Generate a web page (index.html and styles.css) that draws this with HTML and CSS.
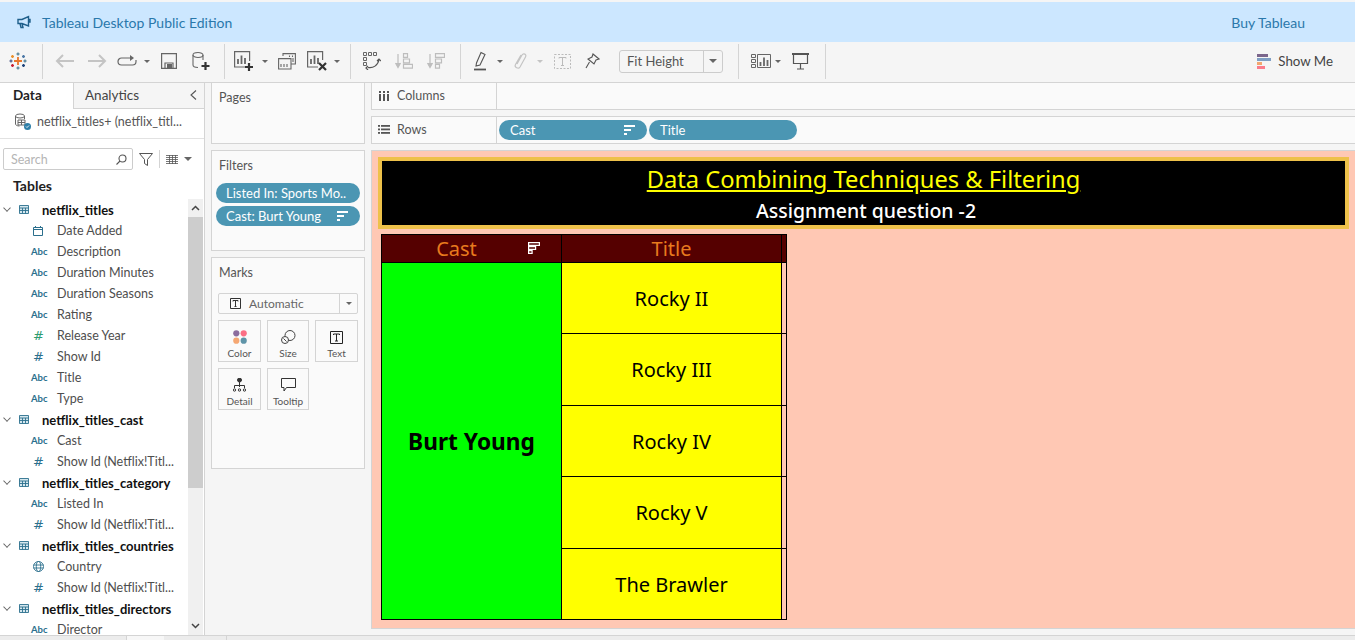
FILE: index.html
```html
<!DOCTYPE html>
<html>
<head>
    <title>Tableau Desktop Public Edition</title>
    <link rel="stylesheet" href="styles.css">
</head>
<body>
    <div class="banner">
        <svg class="banner-icon" width="14" height="14" viewBox="0 0 14 14" fill="none" stroke="#1f5f8b" stroke-width="1.4"><path d="M1 4.500h4L11.500 1.500v9.500L5 8.500H1zM3 8.500l1 4h2l-1-4M11.500 4.500h1.500v2.500h-1.500"/></svg>
        <span class="banner-title">Tableau Desktop Public Edition</span>
        <span class="banner-buy">Buy Tableau</span>
    </div>

    <div class="toolbar">
        <div class="tool-group group-logo">
            <svg width="18" height="18" viewBox="0 0 18 18" stroke-width="1.400" fill="none">
                <path d="M9 5v8M5 9h8" stroke="#e8762b" stroke-width="1.800"/>
                <path d="M9 0.500v3M7.500 2h3" stroke="#5b879b"/>
                <path d="M3.500 3v3M2 4.500h3" stroke="#eb912b"/>
                <path d="M14.500 3v3M13 4.500h3" stroke="#4e79a7"/>
                <path d="M0.500 9h3M2 7.500v3" stroke="#5b6591"/>
                <path d="M14.500 9h3M16 7.500v3" stroke="#59879b"/>
                <path d="M3.500 12v3M2 13.500h3" stroke="#c72035"/>
                <path d="M14.500 12v3M13 13.500h3" stroke="#1f447a"/>
                <path d="M9 14.500v3M7.500 16h3" stroke="#5b879b"/>
            </svg>
        </div>
        <div class="tool-group group-file">
            <span class="tool w32"><svg width="22" height="16" viewBox="0 0 22 16" fill="none" stroke="#c4c4c4" stroke-width="2"><path d="M20 8H3M9 2L3 8l6 6"/></svg></span>
            <span class="tool w32"><svg width="22" height="16" viewBox="0 0 22 16" fill="none" stroke="#c4c4c4" stroke-width="2"><path d="M2 8h17M13 2l6 6-6 6"/></svg></span>
            <span class="tool w28"><svg width="20" height="12" viewBox="0 0 20 12" fill="none" stroke="#666" stroke-width="1.200"><path d="M13 3H4.500a3.500 3.500 0 0 0 0 7h11a3.500 3.500 0 0 0 3.500-3.500V5"/><path d="M13 0l4 3-4 3z" fill="#666" stroke="none"/></svg></span>
            <span class="caret-slot w12"><i class="caret"></i></span>
            <span class="tool w32"><svg width="16" height="16" viewBox="0 0 16 16" fill="none" stroke="#666" stroke-width="1.200"><path d="M.6.600h14.800v14.800H.6zM4 15v-5h8v5"/><path d="M6 11h5v4H6z" fill="#666" stroke="none"/></svg></span>
            <span class="tool w32"><svg width="20" height="20" viewBox="0 0 20 20" fill="none" stroke="#666" stroke-width="1.100"><ellipse cx="7" cy="4" rx="5" ry="2.500"/><path d="M2 4v10c0 1.500 2 2.500 5 2.500M12 4v5"/><path d="M14.500 11v8M10.500 15h8" stroke="#333" stroke-width="2.200"/></svg></span>
        </div>
        <div class="tool-group group-sheet">
            <span class="tool w32"><svg width="20" height="20" viewBox="0 0 20 20" fill="none" stroke="#666" stroke-width="1.200"><path d="M13 16H.6V.6h15V10"/><path d="M4 13V8M7.500 13V4.500M11 13V7" stroke-width="1.800"/><path d="M15 12v8M11 16h8" stroke="#333" stroke-width="2.200"/></svg></span>
            <span class="caret-slot w10"><i class="caret"></i></span>
            <span class="tool w32 shift1"><svg width="18" height="17" viewBox="0 0 18 17" fill="none" stroke="#666" stroke-width="1.100"><path d="M5 3V.6h12.400V11H13"/><path d="M.6 5.600h12.400V16H.6z" fill="#f4f4f4"/><path d="M15 9V5M11.500 4V2.500M14.500 4V2.500"/><path d="M3 14v-3M6 14v-3M9 14v-3"/></svg></span>
            <span class="tool w28"><svg width="20" height="20" viewBox="0 0 20 20" fill="none" stroke="#666" stroke-width="1.200"><path d="M11 16H.6V.6h15V9"/><path d="M4 13V8M7.500 13V4.500M11 13V7" stroke-width="1.800"/><path d="M12 12l7 7M19 12l-7 7" stroke="#333" stroke-width="2.200"/></svg></span>
            <span class="caret-slot w12"><i class="caret"></i></span>
        </div>
        <div class="tool-group group-sort">
            <span class="tool w32"><svg width="18" height="18" viewBox="0 0 18 18" fill="none" stroke="#666" stroke-width="1"><path d="M.5.500h3v3h-3zM5.500.500h3v3h-3zM10.500.500h3v3h-3zM.5 5.500h3v3h-3zM.5 10.500h3v3h-3z"/><path d="M5 15.500c5 1 10-2 11-8M14 9l2-2 2 2M5 14l-2 2 2 2" stroke="#555" stroke-width="1.200"/></svg></span>
            <span class="tool w32"><svg width="18" height="16" viewBox="0 0 18 16" fill="none" stroke="#bdbdbd" stroke-width="1.200"><path d="M3 1v13"/><path d="M.5 10L3 14.500 5.500 10" fill="#bdbdbd"/><path d="M8.500.6h4v3.800h-4zM8.500 6h6v3.800h-6zM8.500 11.400h9v3.800h-9z"/></svg></span>
            <span class="tool w32"><svg width="18" height="16" viewBox="0 0 18 16" fill="none" stroke="#bdbdbd" stroke-width="1.200"><path d="M3 1v13"/><path d="M.5 10L3 14.500 5.500 10" fill="#bdbdbd"/><path d="M8.500.6h9v3.800h-9zM8.500 6h6v3.800h-6zM8.500 11.400h4v3.800h-4z"/></svg></span>
        </div>
        <div class="tool-group group-format">
            <span class="tool w28"><svg width="14" height="20" viewBox="0 0 14 20" fill="none" stroke="#555" stroke-width="1.100"><path d="M7 1.500l4 2L6 14l-4 1 .5-3z"/><path d="M0 18.500h12" stroke-width="1.800"/></svg></span>
            <span class="caret-slot w10"><i class="caret"></i></span>
            <span class="tool w30"><svg width="15" height="18" viewBox="0 0 15 18" fill="none" stroke="#c4c4c4" stroke-width="1.200"><path d="M4 12L9 3c1.500-2.500 5-.5 3.500 2L7 15c-1.500 2.500-6 .5-4.500-2.500L8 3"/></svg></span>
            <span class="caret-slot w10"><i class="caret caret-off"></i></span>
            <span class="tool w32 shift1"><svg width="17" height="15" viewBox="0 0 17 15" fill="none" stroke="#bbb"><path d="M.5.500h16v14H.5z" stroke-dasharray="2 1.500"/><path d="M5 4.500V3.500h7v1M8.500 3.500v8M7 11.500h3"/></svg></span>
            <span class="tool w28"><svg width="15" height="16" viewBox="0 0 15 16" fill="none" stroke="#555" stroke-width="1.100"><path d="M8 1l6 5-3 1-2 4-6-5 4-2zM4.500 9L1 15"/></svg></span>
            <div class="fit-select">
                <span class="fit-label">Fit Height</span>
                <span class="fit-arrow"><i class="caret caret-big"></i></span>
            </div>
        </div>
        <div class="tool-group group-show">
            <span class="tool w24"><svg width="20" height="14" viewBox="0 0 20 14" fill="none" stroke="#666"><path d="M.5.500h4v3h-4zM.5 5.500h4v3h-4zM.5 10.500h4v3h-4zM6.500.500h13v13h-13z"/><path d="M9.500 12V8M13 12V3.500M16.500 12V6" stroke-width="1.800"/></svg></span>
            <span class="caret-slot w10"><i class="caret"></i></span>
            <span class="tool w32 shift1"><svg width="17" height="17" viewBox="0 0 17 17" fill="none" stroke="#555" stroke-width="1.200"><path d="M0 1h17" stroke-width="2"/><path d="M1.500 1v9.500h14V1M8.500 10.500v5M5 16h7"/></svg></span>
        </div>
        <div class="show-me">
            <svg width="14" height="15" viewBox="0 0 14 15"><rect width="11" height="3" x="0" y="0" fill="#7b668c"/><rect width="14" height="3" x="0" y="4" fill="#7f9fc4"/><rect width="5" height="3" x="0" y="8" fill="#f3a66f"/><rect width="8" height="3" x="0" y="12" fill="#fb7c8b"/></svg>
            <span>Show Me</span>
        </div>
    </div>

    <div class="workspace">
        <aside class="data-pane">
            <div class="tabs">
                <div class="tab tab-active">Data</div>
                <div class="tab tab-other">Analytics
                    <svg class="collapse" width="7" height="10" viewBox="0 0 7 10" fill="none" stroke="#555" stroke-width="1.100"><path d="M6 .5L1 5l5 4.500"/></svg>
                </div>
            </div>
            <div class="source">
                <svg width="18" height="18" viewBox="0 0 18 18" fill="none" stroke="#666"><ellipse cx="6" cy="3" rx="4.500" ry="2"/><path d="M1.500 3v8c0 1 1.500 2 4 2M10.500 3v3M4 7h7v5H4zM4 9.500h7M7.500 7v5"/><circle cx="13.500" cy="13.500" r="3.500" fill="#2e7fa8" stroke="none"/><path d="M12 13.500l1 1 2-2" stroke="#fff" stroke-width=".9"/></svg>
                <span>netflix_titles+ (netflix_titl...</span>
            </div>
            <div class="search-row">
                <div class="search-box">
                    <span>Search</span>
                    <svg width="11" height="11" viewBox="0 0 11 11" fill="none" stroke="#555" stroke-width="1.100"><circle cx="6.500" cy="4.500" r="3.500"/><path d="M4 7l-3.500 3.500"/></svg>
                </div>
                <svg width="14" height="13" viewBox="0 0 14 13" fill="none" stroke="#555"><path d="M.5.500h13L8.500 6.500v6l-3-2v-4z"/></svg>
                <span class="search-sep"></span>
                <svg width="12" height="9" viewBox="0 0 12 9" fill="none" stroke="#555"><path d="M0 .5h12M0 2.500h12M0 4.500h12M0 6.500h12M0 8.500h12M3.500 0v9M6.500 0v9M9.500 0v9" stroke-width=".8"/></svg>
                <i class="caret caret-dark"></i>
            </div>
            <div class="tables-head">Tables</div>
            <div class="field-area">
                <ul class="field-list">
                    <li class="table-row"><span class="chev"></span><svg class="grid-ico" width="10" height="9" viewBox="0 0 10 9" fill="#d5e7ee" stroke="#2b6f8d" stroke-width=".9"><path d="M.5.500h9v8h-9zM.5 3h9M.5 5.500h9M3.500 3v5.500M6.500 3v5.500"/></svg><b>netflix_titles</b></li>
                    <li class="field"><span class="ftype"><svg width="10" height="10" viewBox="0 0 10 10" fill="none" stroke="#2b6f8d"><path d="M.5 1.500h9v8h-9zM.5 3.500h9M2.500 0v2M7.500 0v2"/></svg></span>Date Added</li>
                    <li class="field"><span class="ftype abc">Abc</span>Description</li>
                    <li class="field"><span class="ftype abc">Abc</span>Duration Minutes</li>
                    <li class="field"><span class="ftype abc">Abc</span>Duration Seasons</li>
                    <li class="field"><span class="ftype abc">Abc</span>Rating</li>
                    <li class="field"><span class="ftype hash hash-green">#</span>Release Year</li>
                    <li class="field"><span class="ftype hash">#</span>Show Id</li>
                    <li class="field"><span class="ftype abc">Abc</span>Title</li>
                    <li class="field"><span class="ftype abc">Abc</span>Type</li>
                    <li class="table-row"><span class="chev"></span><svg class="grid-ico" width="10" height="9" viewBox="0 0 10 9" fill="#d5e7ee" stroke="#2b6f8d" stroke-width=".9"><path d="M.5.500h9v8h-9zM.5 3h9M.5 5.500h9M3.500 3v5.500M6.500 3v5.500"/></svg><b>netflix_titles_cast</b></li>
                    <li class="field"><span class="ftype abc">Abc</span>Cast</li>
                    <li class="field"><span class="ftype hash">#</span>Show Id (Netflix!Titl...</li>
                    <li class="table-row"><span class="chev"></span><svg class="grid-ico" width="10" height="9" viewBox="0 0 10 9" fill="#d5e7ee" stroke="#2b6f8d" stroke-width=".9"><path d="M.5.500h9v8h-9zM.5 3h9M.5 5.500h9M3.500 3v5.500M6.500 3v5.500"/></svg><b>netflix_titles_category</b></li>
                    <li class="field"><span class="ftype abc">Abc</span>Listed In</li>
                    <li class="field"><span class="ftype hash">#</span>Show Id (Netflix!Titl...</li>
                    <li class="table-row"><span class="chev"></span><svg class="grid-ico" width="10" height="9" viewBox="0 0 10 9" fill="#d5e7ee" stroke="#2b6f8d" stroke-width=".9"><path d="M.5.500h9v8h-9zM.5 3h9M.5 5.500h9M3.500 3v5.500M6.500 3v5.500"/></svg><b>netflix_titles_countries</b></li>
                    <li class="field"><span class="ftype"><svg width="11" height="11" viewBox="0 0 11 11" fill="none" stroke="#2b6f8d" stroke-width=".9"><circle cx="5.500" cy="5.500" r="5"/><ellipse cx="5.500" cy="5.500" rx="2.200" ry="5"/><path d="M.5 4h10M.5 7h10"/></svg></span>Country</li>
                    <li class="field"><span class="ftype hash">#</span>Show Id (Netflix!Titl...</li>
                    <li class="table-row"><span class="chev"></span><svg class="grid-ico" width="10" height="9" viewBox="0 0 10 9" fill="#d5e7ee" stroke="#2b6f8d" stroke-width=".9"><path d="M.5.500h9v8h-9zM.5 3h9M.5 5.500h9M3.500 3v5.500M6.500 3v5.500"/></svg><b>netflix_titles_directors</b></li>
                    <li class="field"><span class="ftype abc">Abc</span>Director</li>
                </ul>
                <div class="scrollbar">
                    <span class="scroll-btn"><svg width="9" height="6" viewBox="0 0 9 6" fill="none" stroke="#444" stroke-width="1.500"><path d="M1 5l3.500-3.500L8 5"/></svg></span>
                    <span class="scroll-thumb"></span>
                    <span class="scroll-rest"></span>
                    <span class="scroll-btn"><svg width="9" height="6" viewBox="0 0 9 6" fill="none" stroke="#444" stroke-width="1.500"><path d="M1 1l3.500 3.500L8 1"/></svg></span>
                </div>
            </div>
        </aside>

        <section class="cards">
            <div class="card card-pages"><div class="card-title">Pages</div></div>
            <div class="card card-filters">
                <div class="card-title">Filters</div>
                <div class="pill pill-filter">Listed In: Sports Mo..</div>
                <div class="pill pill-filter">Cast: Burt Young
                    <svg class="sort-ico" width="11" height="10" viewBox="0 0 11 10" fill="#fff"><rect width="11" height="2"/><rect y="4" width="7" height="2"/><rect y="8" width="3" height="2"/></svg>
                </div>
            </div>
            <div class="card card-marks">
                <div class="card-title">Marks</div>
                <div class="mark-select">
                    <svg width="11" height="11" viewBox="0 0 11 11" fill="none" stroke="#333"><path d="M.5.500h10v10H.5zM3 3.500v-1h5v1M5.500 2.500v6M4.500 8.500h2"/></svg>
                    <span class="mark-label">Automatic</span>
                    <span class="mark-arrow"><i class="caret"></i></span>
                </div>
                <div class="mark-grid">
                    <div class="mark-btn">
                        <svg width="14" height="14" viewBox="0 0 14 14"><circle cx="3.300" cy="3.300" r="3.100" fill="#8c6d9e"/><circle cx="10.700" cy="3.300" r="3.100" fill="#fb6f85"/><circle cx="3.300" cy="10.700" r="3.100" fill="#f5a772"/><circle cx="10.700" cy="10.700" r="3.100" fill="#5f94a8"/></svg>
                        <span>Color</span>
                    </div>
                    <div class="mark-btn">
                        <svg width="15" height="14" viewBox="0 0 15 14" fill="none" stroke="#444"><circle cx="9" cy="5.500" r="5"/><circle cx="4" cy="10" r="3.500" fill="#fafafa"/><path d="M2.500 8.500l3 3"/></svg>
                        <span>Size</span>
                    </div>
                    <div class="mark-btn">
                        <svg width="13" height="13" viewBox="0 0 13 13" fill="none" stroke="#222"><path d="M.5.500h12v12H.5zM3.500 4V3h6v1M6.500 3v7M5 10h3"/></svg>
                        <span>Text</span>
                    </div>
                    <div class="mark-btn">
                        <svg width="13" height="14" viewBox="0 0 13 14" fill="none" stroke="#333"><circle cx="6.500" cy="2" r="2" fill="#333"/><path d="M6.500 4v5M1.500 10V7.500h10V10"/><circle cx="1.500" cy="12" r="1.200"/><circle cx="6.500" cy="12" r="1.200"/><circle cx="11.500" cy="12" r="1.200"/></svg>
                        <span>Detail</span>
                    </div>
                    <div class="mark-btn">
                        <svg width="15" height="14" viewBox="0 0 15 14" fill="none" stroke="#333"><path d="M.5.500h14v9H5.500l-2.500 3.500v-3.500H.5z"/></svg>
                        <span>Tooltip</span>
                    </div>
                </div>
            </div>
        </section>

        <section class="main">
            <div class="shelf">
                <div class="shelf-label"><svg width="12" height="10" viewBox="-1 0 12 10" fill="#555"><rect y="3" width="2" height="7"/><rect x="4" y="3" width="2" height="7"/><rect x="8" y="3" width="2" height="7"/><rect y="0" width="2" height="2"/><rect x="4" y="0" width="2" height="2"/><rect x="8" y="0" width="2" height="2"/></svg>Columns</div>
                <div class="shelf-body"></div>
            </div>
            <div class="shelf">
                <div class="shelf-label"><svg width="12" height="9" viewBox="0 0 12 9" fill="#555"><rect width="2" height="1.800"/><rect x="3" width="9" height="1.800"/><rect y="3.500" width="2" height="1.800"/><rect x="3" y="3.500" width="9" height="1.800"/><rect y="7" width="2" height="1.800"/><rect x="3" y="7" width="9" height="1.800"/></svg>Rows</div>
                <div class="shelf-body">
                    <div class="pill pill-shelf">Cast
                        <svg class="sort-ico" width="11" height="10" viewBox="0 0 11 10" fill="#fff"><rect width="11" height="2"/><rect y="4" width="7" height="2"/><rect y="8" width="3" height="2"/></svg>
                    </div>
                    <div class="pill pill-shelf">Title</div>
                </div>
            </div>

            <div class="viz">
                <div class="viz-title">
                    <div class="viz-heading">Data Combining Techniques &amp; Filtering</div>
                    <div class="viz-sub">Assignment question -2</div>
                </div>
                <div class="crosstab">
                    <div class="th th-cast">Cast
                        <svg class="th-sort" width="12" height="12" viewBox="0 0 12 12" fill="#550000" stroke="#fff" stroke-width="1.200"><path d="M.6.600h10.800v2.800H.6zM.6 4.600h7v2.800h-7zM.6 8.600h3.500v2.800H.6z"/></svg>
                    </div>
                    <div class="th th-title">Title</div>
                    <div class="th th-end"></div>
                    <div class="cast-cell">Burt Young</div>
                    <div class="title-cell">Rocky II</div>
                    <div class="end-cell"></div>
                    <div class="title-cell">Rocky III</div>
                    <div class="end-cell"></div>
                    <div class="title-cell">Rocky IV</div>
                    <div class="end-cell"></div>
                    <div class="title-cell">Rocky V</div>
                    <div class="end-cell"></div>
                    <div class="title-cell">The Brawler</div>
                    <div class="end-cell"></div>
                </div>
            </div>
        </section>
    </div>

    <div class="statusbar">
        <span class="status-tab"></span>
        <span class="status-tab status-tab-b"></span>
        <span class="status-tab status-tab-b"></span>
    </div>
</body>
</html>
```

FILE: styles.css
```css
* {
    box-sizing: border-box;
}
html, body {
    height: 100%;
}
body {
    margin: 0;
    padding-top: 2px;
    background-color: #f5f5f5;
    font-family: Lato, "Open Sans", sans-serif;
    font-size: 12.5px;
    color: #444;
    overflow: hidden;
}
ul {
    list-style: none;
    margin: 0;
    padding: 0;
}
.banner {
    height: 40px;
    display: flex;
    align-items: center;
    background-color: #cce7ff;
    color: #2a78ab;
    font-size: 14px;
}
.banner-icon {
    margin-left: 17px;
}
.banner-title {
    margin-left: 11px;
}
.banner-buy {
    margin-left: auto;
    margin-right: 50px;
}

.toolbar {
    height: 40px;
    padding-bottom: 2px;
    display: flex;
    align-items: center;
    background-color: #f5f5f5;
}
.tool-group {
    display: flex;
    align-items: center;
    height: 35px;
    border-right: 1px solid #d4d4d4;
}
.group-logo {
    width: 43px;
    padding-left: 9px;
}
.group-file {
    width: 182px;
    padding-left: 6px;
}
.group-sheet {
    width: 126px;
    padding-left: 3px;
}
.group-sort {
    width: 110px;
    padding-left: 5px;
}
.group-format {
    width: 278px;
    padding-left: 6px;
}
.group-show {
    width: 87px;
    padding-left: 10px;
}
.tool, .caret-slot {
    display: flex;
    justify-content: center;
    align-items: center;
}
.w10 { width: 10px; }
.w12 { width: 12px; }
.w24 { width: 24px; }
.w28 { width: 28px; }
.w30 { width: 30px; }
.w32 { width: 32px; }
.shift1 { margin-left: 1px; }
.caret {
    display: block;
    width: 0;
    height: 0;
    border-left: 3px solid transparent;
    border-right: 3px solid transparent;
    border-top: 3px solid #666;
}
.caret-off {
    border-top-color: #c4c4c4;
}
.caret-big {
    border-left-width: 4px;
    border-right-width: 4px;
    border-top-width: 4px;
}
.caret-dark {
    border-left-width: 4px;
    border-right-width: 4px;
    border-top-width: 4px;
    margin-left: 6px;
}
.fit-select {
    display: flex;
    width: 104px;
    height: 23px;
    margin-left: 13px;
    border: 1px solid #ccc;
    border-radius: 3px;
    color: #555;
    font-size: 13px;
}
.fit-label {
    flex: 1;
    padding-left: 7px;
    line-height: 20px;
}
.fit-arrow {
    width: 19px;
    display: flex;
    align-items: center;
    justify-content: center;
    border-left: 1px solid #ccc;
}
.show-me {
    margin-left: auto;
    margin-right: 22px;
    display: flex;
    align-items: center;
    gap: 7px;
    font-size: 13.3px;
    color: #444;
}

.workspace {
    display: flex;
    height: 553px;
    border-top: 1px solid #d4d4d4;
}
.data-pane {
    width: 205px;
    flex-shrink: 0;
    background-color: #fff;
    border-right: 1px solid #d4d4d4;
    display: flex;
    flex-direction: column;
}
.tabs {
    display: flex;
    height: 26px;
}
.tab {
    font-size: 13.5px;
    line-height: 24px;
}
.tab-active {
    width: 73px;
    padding-left: 13px;
    font-weight: 700;
    color: #222;
}
.tab-other {
    flex: 1;
    display: flex;
    align-items: center;
    justify-content: space-between;
    padding: 0 7px 1px 11px;
    background-color: #f5f5f5;
    border-left: 1px solid #d4d4d4;
    border-bottom: 1px solid #d4d4d4;
}
.source {
    height: 30px;
    display: flex;
    align-items: center;
    gap: 5px;
    padding: 0 0 4px 14px;
    border-bottom: 1px solid #e2e2e2;
    color: #555;
}
.search-row {
    display: flex;
    align-items: center;
    height: 22px;
    margin-top: 9px;
    padding-left: 3px;
}
.search-box {
    width: 130px;
    height: 22px;
    margin-right: 6px;
    padding: 0 5px 0 7px;
    display: flex;
    align-items: center;
    justify-content: space-between;
    border: 1px solid #ccc;
    border-radius: 2px;
    color: #b5b5b5;
}
.search-sep {
    width: 1px;
    height: 18px;
    margin: 0 6px;
    background-color: #d4d4d4;
}
.tables-head {
    margin-top: 5px;
    padding-left: 13px;
    height: 22px;
    line-height: 22px;
    font-size: 14px;
    font-weight: 700;
    color: #222;
}
.field-area {
    flex: 1;
    display: flex;
    min-height: 0;
    margin-top: 2px;
}
.field-list {
    flex: 1;
    overflow: hidden;
}
.table-row, .field {
    height: 21px;
    display: flex;
    align-items: center;
    white-space: nowrap;
}
.table-row b {
    font-size: 13px;
    color: #111;
    margin-left: 13px;
}
.chev {
    width: 6px;
    height: 6px;
    margin: -4px 7px 0 4px;
    border-right: 1px solid #666;
    border-bottom: 1px solid #666;
    transform: rotate(45deg) scale(.9);
}
.grid-ico {
    margin-left: 2px;
}
.field {
    color: #4e4e4e;
}
.ftype {
    width: 27px;
    margin-left: 30px;
    padding-left: 3px;
    display: flex;
    align-items: center;
    color: #2b6f8d;
}
.abc {
    font-size: 9.5px;
    font-weight: 700;
    margin-left: 28px;
    width: 29px;
}
.hash {
    font-family: "DejaVu Sans", sans-serif;
    font-size: 13px;
}
.hash-green {
    color: #2e9b6f;
}
.scrollbar {
    width: 15px;
    margin-right: 1px;
    background-color: #f0f0f0;
    display: flex;
    flex-direction: column;
}
.scroll-btn {
    height: 18px;
    display: flex;
    align-items: center;
    justify-content: center;
    flex-shrink: 0;
}
.scroll-thumb {
    height: 271px;
    background-color: #cdcdcd;
}
.scroll-rest {
    flex: 1;
}

.cards {
    width: 166px;
    flex-shrink: 0;
    padding: 0 6px;
    display: flex;
    flex-direction: column;
    gap: 6px;
}
.card {
    background-color: #fafafa;
    border: 1px solid #d4d4d4;
    padding: 0 0 0 6px;
}
.card-title {
    padding-top: 7px;
    height: 24px;
    margin-left: 1px;
    color: #555;
}
.card-pages {
    height: 61px;
    border-top: 0;
}
.card-filters {
    height: 101px;
    padding-left: 4px;
}
.card-filters .card-title {
    margin-left: 3px;
    margin-bottom: 8px;
}
.card-marks {
    height: 212px;
}
.pill {
    display: flex;
    align-items: center;
    height: 20px;
    padding-bottom: 1px;
    border-radius: 10px;
    background-color: #4b96b3;
    color: #fff;
    font-size: 13px;
    white-space: nowrap;
    position: relative;
}
.pill-filter {
    width: 144px;
    padding-left: 10px;
    margin-bottom: 3px;
}
.sort-ico {
    position: absolute;
    right: 12px;
    top: 5px;
}
.mark-select {
    display: flex;
    align-items: center;
    width: 140px;
    height: 21px;
    margin-top: 11px;
    border: 1px solid #d4d4d4;
    border-radius: 2px;
    padding-left: 11px;
    font-size: 12px;
    color: #666;
}
.mark-label {
    flex: 1;
    margin-left: 8px;
}
.mark-arrow {
    width: 18px;
    height: 100%;
    display: flex;
    align-items: center;
    justify-content: center;
    border-left: 1px solid #d4d4d4;
}
.mark-grid {
    display: grid;
    grid-template-columns: 43px 42px 43px;
    grid-auto-rows: 42px;
    gap: 6px 6px;
    margin-top: 6px;
}
.mark-btn {
    border: 1px solid #d4d4d4;
    display: flex;
    flex-direction: column;
    align-items: center;
    justify-content: flex-end;
    gap: 3px;
    padding-bottom: 2px;
    font-size: 10px;
    color: #555;
}

.main {
    flex: 1;
    display: flex;
    flex-direction: column;
    gap: 6px;
}
.shelf {
    height: 28px;
    display: flex;
    background-color: #fafafa;
    border: 1px solid #d4d4d4;
    border-right: 0;
}
.shelf:first-child {
    height: 27px;
    border-top: 0;
}
.shelf-label {
    width: 125px;
    display: flex;
    align-items: center;
    gap: 7px;
    padding: 0 0 1px 6px;
    border-right: 1px solid #d4d4d4;
    color: #555;
    font-size: 12.5px;
}
.shelf-body {
    flex: 1;
    display: flex;
    align-items: center;
    gap: 2px;
    padding-left: 2px;
}
.pill-shelf {
    width: 148px;
    padding-left: 11px;
}
.viz {
    height: 479px;
    background-color: #ffc8b4;
    border: 1px solid #d4d4d4;
    border-right: 0;
    padding: 6px 6px 0 6px;
}
.viz-title {
    height: 72px;
    padding-top: 1px;
    background-color: #000;
    border: 4px solid #eec14a;
    display: flex;
    flex-direction: column;
    align-items: center;
    font-family: "Noto Sans", sans-serif;
}
.viz-heading {
    font-size: 23.7px;
    line-height: 34px;
    color: #ffff00;
    text-decoration: underline;
}
.viz-sub {
    padding-left: 5px;
    font-size: 19.5px;
    font-weight: 500;
    line-height: 30px;
    color: #fff;
}
.crosstab {
    display: grid;
    grid-template-columns: 180px 220px 4px;
    grid-template-rows: 28px 71px 72px 71px 72px 70px;
    width: 406px;
    margin: 5px 0 0 3px;
    border: 1px solid #000;
    font-family: "Noto Sans", sans-serif;
    color: #000;
}
.th {
    background-color: #550000;
    color: #e87a1e;
    font-size: 20px;
    display: flex;
    align-items: center;
    justify-content: center;
    border-right: 1px solid #000;
    border-bottom: 1px solid #000;
    position: relative;
}
.th-end {
    border-right: 0;
}
.th-cast {
    padding-right: 30px;
}
.th-sort {
    position: absolute;
    right: 21px;
    top: 7px;
}
.cast-cell {
    grid-row: 2 / span 5;
    background-color: #00ff00;
    border-right: 1px solid #000;
    display: flex;
    align-items: center;
    justify-content: center;
    font-size: 22.7px;
    font-weight: 700;
}
.title-cell {
    background-color: #ffff00;
    border-right: 1px solid #000;
    border-bottom: 1px solid #000;
    display: flex;
    align-items: center;
    justify-content: center;
    font-size: 20px;
}
.title-cell:nth-last-child(2) {
    border-bottom: 0;
}
.end-cell {
    border-bottom: 1px solid #000;
}
.end-cell:last-child {
    border-bottom: 0;
}

.statusbar {
    height: 5px;
    display: flex;
    border-top: 1px solid #d4d4d4;
    background-color: #ececec;
    padding-left: 126px;
}
.status-tab {
    width: 39px;
    background-color: #f7f7f7;
    border-right: 1px solid #d4d4d4;
    border-left: 1px solid #d4d4d4;
}
.status-tab-b {
    width: 32px;
    margin-left: -1px;
    border-left: 0;
    background-color: #ececec;
}
```
